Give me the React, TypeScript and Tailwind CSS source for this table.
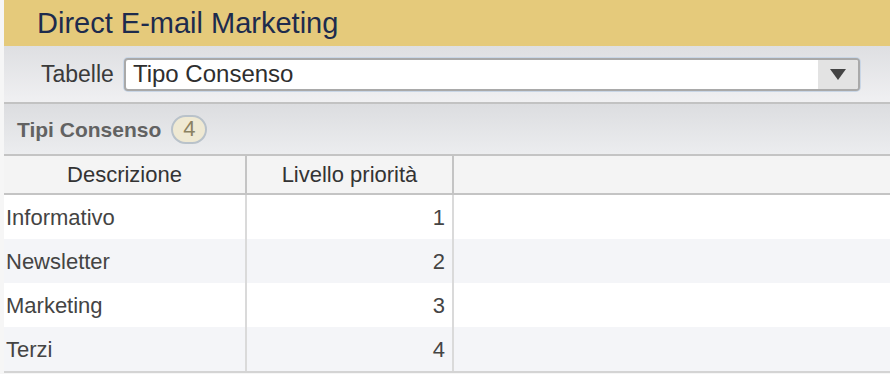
export default function App() {
  const rows = [
    { d: 'Informativo', p: 1 },
    { d: 'Newsletter', p: 2 },
    { d: 'Marketing', p: 3 },
    { d: 'Terzi', p: 4 },
  ]

  return (
    <div className="flex h-[374px] w-[890px] overflow-hidden bg-[#f6f6f6]" style={{ fontFamily: '"Liberation Sans", Arial, sans-serif' }}>
      <div className="w-[4px] shrink-0 bg-[#f6f6f6]" />
      <div className="flex flex-1 flex-col">
        {/* title bar */}
        <div className="flex h-[46px] items-center bg-[#e5ca7b] pl-[33px]">
          <h1 className="text-[29px] leading-none text-[#1d2b4d]">Direct E-mail Marketing</h1>
        </div>

        {/* toolbar */}
        <div className="flex h-[58px] items-center border-b-2 border-[#c2c2c2] bg-gradient-to-b from-[#dedfe2] to-[#f0f0f2] pl-[37px] pr-[30px]">
          <span className="mr-[10px] text-[23px] leading-none text-[#3a3a3a]">Tabelle</span>
          <div className="flex h-[33px] flex-1 items-center overflow-hidden rounded-[4px] border-2 border-[#a9a9a9] bg-white shadow-[0_0_0_1px_#c9d6e6]">
            <span className="flex-1 pl-[7px] text-[24px] leading-none text-[#2e2e2e]">Tipo Consenso</span>
            <div className="flex h-full w-[40px] items-center justify-center bg-[#e3e3e3]">
              <svg width="16" height="11" viewBox="0 0 16 11">
                <path d="M0 0 H16 L8 11 Z" fill="#444" />
              </svg>
            </div>
          </div>
        </div>

        {/* section header */}
        <div className="flex h-[52px] items-center border-b-2 border-[#c4c4c4] bg-gradient-to-b from-[#dcdde0] to-[#ecedef] pl-[13px]">
          <span className="text-[21px] font-bold leading-none text-[#626262]">Tipi Consenso</span>
          <span className="ml-[10px] flex h-[29px] w-[36px] items-center justify-center rounded-full border-2 border-[#b9c2ca] bg-[#efe9d3] text-[22px] leading-none text-[#8b8262]">4</span>
        </div>

        {/* column header */}
        <div className="flex h-[39px] border-b-2 border-[#c4c4c4] bg-[#f4f4f4] text-[22px] text-[#333]">
          <div className="flex w-[243px] items-center justify-center border-r-2 border-[#c4c4c4]">Descrizione</div>
          <div className="flex w-[207px] items-center justify-center border-r-2 border-[#c4c4c4]">Livello priorità</div>
          <div className="flex-1" />
        </div>

        {/* rows */}
        <div className="flex flex-col border-b-2 border-[#d4d4d4] text-[22px] text-[#444]">
          {rows.map((r, i) => (
            <div key={r.d} className={`flex h-[44px] ${i % 2 ? 'bg-[#f4f5f8]' : 'bg-white'}`}>
              <div className="flex w-[243px] items-center border-r-2 border-[#dadada] pl-[2px]">{r.d}</div>
              <div className="flex w-[207px] items-center justify-end border-r-2 border-[#dadada] pr-[7px]">{r.p}</div>
              <div className="flex-1" />
            </div>
          ))}
        </div>
      </div>
    </div>
  )
}
